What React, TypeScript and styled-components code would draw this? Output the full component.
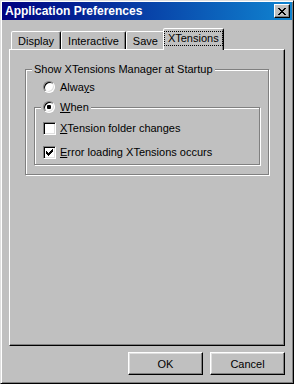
import React from "react";
import styled, { createGlobalStyle } from "styled-components";

const GlobalStyle = createGlobalStyle`
  html, body {
    margin: 0;
    padding: 0;
    background: #c0c0c0;
  }
  body {
    font-family: "Liberation Sans", Arial, sans-serif;
    font-size: 11px;
    color: #000;
  }
  * {
    box-sizing: border-box;
  }
`;

const tabs = ["Display", "Interactive", "Save", "XTensions"];

const CloseGlyph = () => (
  <svg width="8" height="7" viewBox="0 0 8 7" shapeRendering="crispEdges">
    <path
      d="M0 0h2v1H0zM6 0h2v1H6zM1 1h2v1H1zM5 1h2v1H5zM2 2h4v1H2zM3 3h2v1H3zM2 4h4v1H2zM1 5h2v1H1zM5 5h2v1H5zM0 6h2v1H0zM6 6h2v1H6z"
      fill="#000"
    />
  </svg>
);

const CheckGlyph = () => (
  <svg width="7" height="7" viewBox="0 0 7 7" shapeRendering="crispEdges">
    <path
      d="M0 2h1v3H0zM1 3h1v3H1zM2 4h1v3H2zM3 3h1v3H3zM4 2h1v3H4zM5 1h1v3H5zM6 0h1v3H6z"
      fill="#000"
    />
  </svg>
);

const Radio: React.FC<{ checked?: boolean }> = ({ checked }) => (
  <RadioBox>{checked && <RadioDot />}</RadioBox>
);

const Checkbox: React.FC<{ checked?: boolean }> = ({ checked }) => (
  <CheckBox>{checked && <CheckGlyph />}</CheckBox>
);

export default function App() {
  return (
    <>
      <GlobalStyle />
      <Window>
        <TitleBar>
          <Title>Application Preferences</Title>
          <CloseButton>
            <CloseGlyph />
          </CloseButton>
        </TitleBar>
        <Body>
          <TabStrip>
            {tabs.map((t) => (
              <Tab key={t} $active={t === "XTensions"}>
                {t === "XTensions" ? <Focus>{t}</Focus> : t}
              </Tab>
            ))}
          </TabStrip>
          <Panel>
            <GroupBox>
              <Legend>Show XTensions Manager at Startup</Legend>
              <OptionRow $indent={9} $height={20} $top={1}>
                <Slot>
                  <Radio />
                </Slot>
                <span>
                  Alwa<u>y</u>s
                </span>
              </OptionRow>
              <InnerGroup>
                <InnerLegend>
                  <Slot>
                    <Radio checked />
                  </Slot>
                  <span>
                    <u>W</u>hen
                  </span>
                </InnerLegend>
                <OptionRow $height={24}>
                  <Slot>
                    <Checkbox />
                  </Slot>
                  <span>
                    <u>X</u>Tension folder changes
                  </span>
                </OptionRow>
                <OptionRow $height={24}>
                  <Slot>
                    <Checkbox checked />
                  </Slot>
                  <span>
                    <u>E</u>rror loading XTensions occurs
                  </span>
                </OptionRow>
              </InnerGroup>
            </GroupBox>
          </Panel>
          <Footer>
            <Button>OK</Button>
            <Button>Cancel</Button>
          </Footer>
        </Body>
      </Window>
    </>
  );
}

const Window = styled.div`
  width: 294px;
  height: 384px;
  display: flex;
  flex-direction: column;
  background: #c0c0c0;
  border: 1px solid;
  border-color: #dfdfdf #000 #000 #dfdfdf;
  box-shadow: inset 1px 1px #fff, inset -1px -1px #808080;
  padding: 1px;
`;

const TitleBar = styled.div`
  height: 18px;
  display: flex;
  align-items: center;
  justify-content: space-between;
  padding: 0 2px 0 3px;
  background: linear-gradient(to right, #000080, #1084d0);
`;

const Title = styled.div`
  color: #fff;
  font-weight: bold;
  font-size: 12px;
`;

const CloseButton = styled.div`
  width: 16px;
  height: 14px;
  display: flex;
  align-items: center;
  justify-content: center;
  background: #c0c0c0;
  border: 1px solid;
  border-color: #fff #000 #000 #fff;
  box-shadow: inset -1px -1px #808080;
`;

const Body = styled.div`
  flex: 1;
  display: flex;
  flex-direction: column;
  padding: 8px 7px 7px;
`;

const TabStrip = styled.div`
  position: relative;
  z-index: 1;
  height: 21px;
  display: flex;
  align-items: flex-end;
  padding-left: 2px;
`;

const Tab = styled.div<{ $active?: boolean }>`
  height: ${(p) => (p.$active ? "22px" : "18px")};
  margin: ${(p) => (p.$active ? "0 -2px -1px" : "0")};
  padding: ${(p) => (p.$active ? "0 1px 2px" : "0 6px")};
  display: flex;
  align-items: center;
  background: #c0c0c0;
  border: 1px solid;
  border-bottom: none;
  border-color: #fff #000 transparent #fff;
  border-radius: 2px 2px 0 0;
  box-shadow: inset -1px 0 #808080;
  white-space: nowrap;
`;

const Focus = styled.span`
  padding: 0 3px;
  line-height: 13px;
  outline: 1px dotted #000;
  outline-offset: 0;
`;

const Panel = styled.div`
  flex: 1;
  border: 1px solid;
  border-color: #fff #000 #000 #fff;
  box-shadow: inset -1px -1px #808080;
  padding: 13px 15px 0 15px;
`;

const GroupBox = styled.fieldset`
  margin: 0;
  min-width: 0;
  border: 1px solid #808080;
  box-shadow: inset 1px 1px #fff, 1px 1px #fff;
  padding: 0 8px 9px;
`;

const Legend = styled.legend`
  margin-left: -2px;
  padding: 0 2px;
  line-height: 13px;
  background: #c0c0c0;
`;

const InnerGroup = styled(GroupBox)`
  margin-top: 3px;
  padding: 2px 8px 0;
`;

const InnerLegend = styled(Legend)`
  display: flex;
  align-items: center;
  height: 14px;
`;

const OptionRow = styled.div<{ $indent?: number; $height: number; $top?: number }>`
  display: flex;
  align-items: center;
  height: ${(p) => p.$height}px;
  margin-left: ${(p) => p.$indent ?? 0}px;
  margin-top: ${(p) => p.$top ?? 0}px;
`;

const Slot = styled.div`
  width: 17px;
  display: flex;
  align-items: center;
`;

const RadioBox = styled.div`
  width: 12px;
  height: 12px;
  border-radius: 50%;
  border: 1px solid;
  border-color: #808080 #fff #fff #808080;
  box-shadow: inset 1px 1px #000, inset -1px -1px #dfdfdf;
  background: #fff;
  display: flex;
  align-items: center;
  justify-content: center;
`;

const RadioDot = styled.div`
  width: 4px;
  height: 4px;
  border-radius: 1px;
  background: #000;
`;

const CheckBox = styled.div`
  width: 13px;
  height: 13px;
  border: 1px solid;
  border-color: #808080 #fff #fff #808080;
  box-shadow: inset 1px 1px #000, inset -1px -1px #dfdfdf;
  background: #fff;
  display: flex;
  align-items: center;
  justify-content: center;
`;

const Footer = styled.div`
  display: flex;
  justify-content: flex-end;
  gap: 7px;
  margin-top: 6px;
`;

const Button = styled.div`
  width: 75px;
  height: 23px;
  display: flex;
  align-items: center;
  justify-content: center;
  background: #c0c0c0;
  border: 1px solid;
  border-color: #fff #000 #000 #fff;
  box-shadow: inset -1px -1px #808080, inset 1px 1px #dfdfdf;
`;
